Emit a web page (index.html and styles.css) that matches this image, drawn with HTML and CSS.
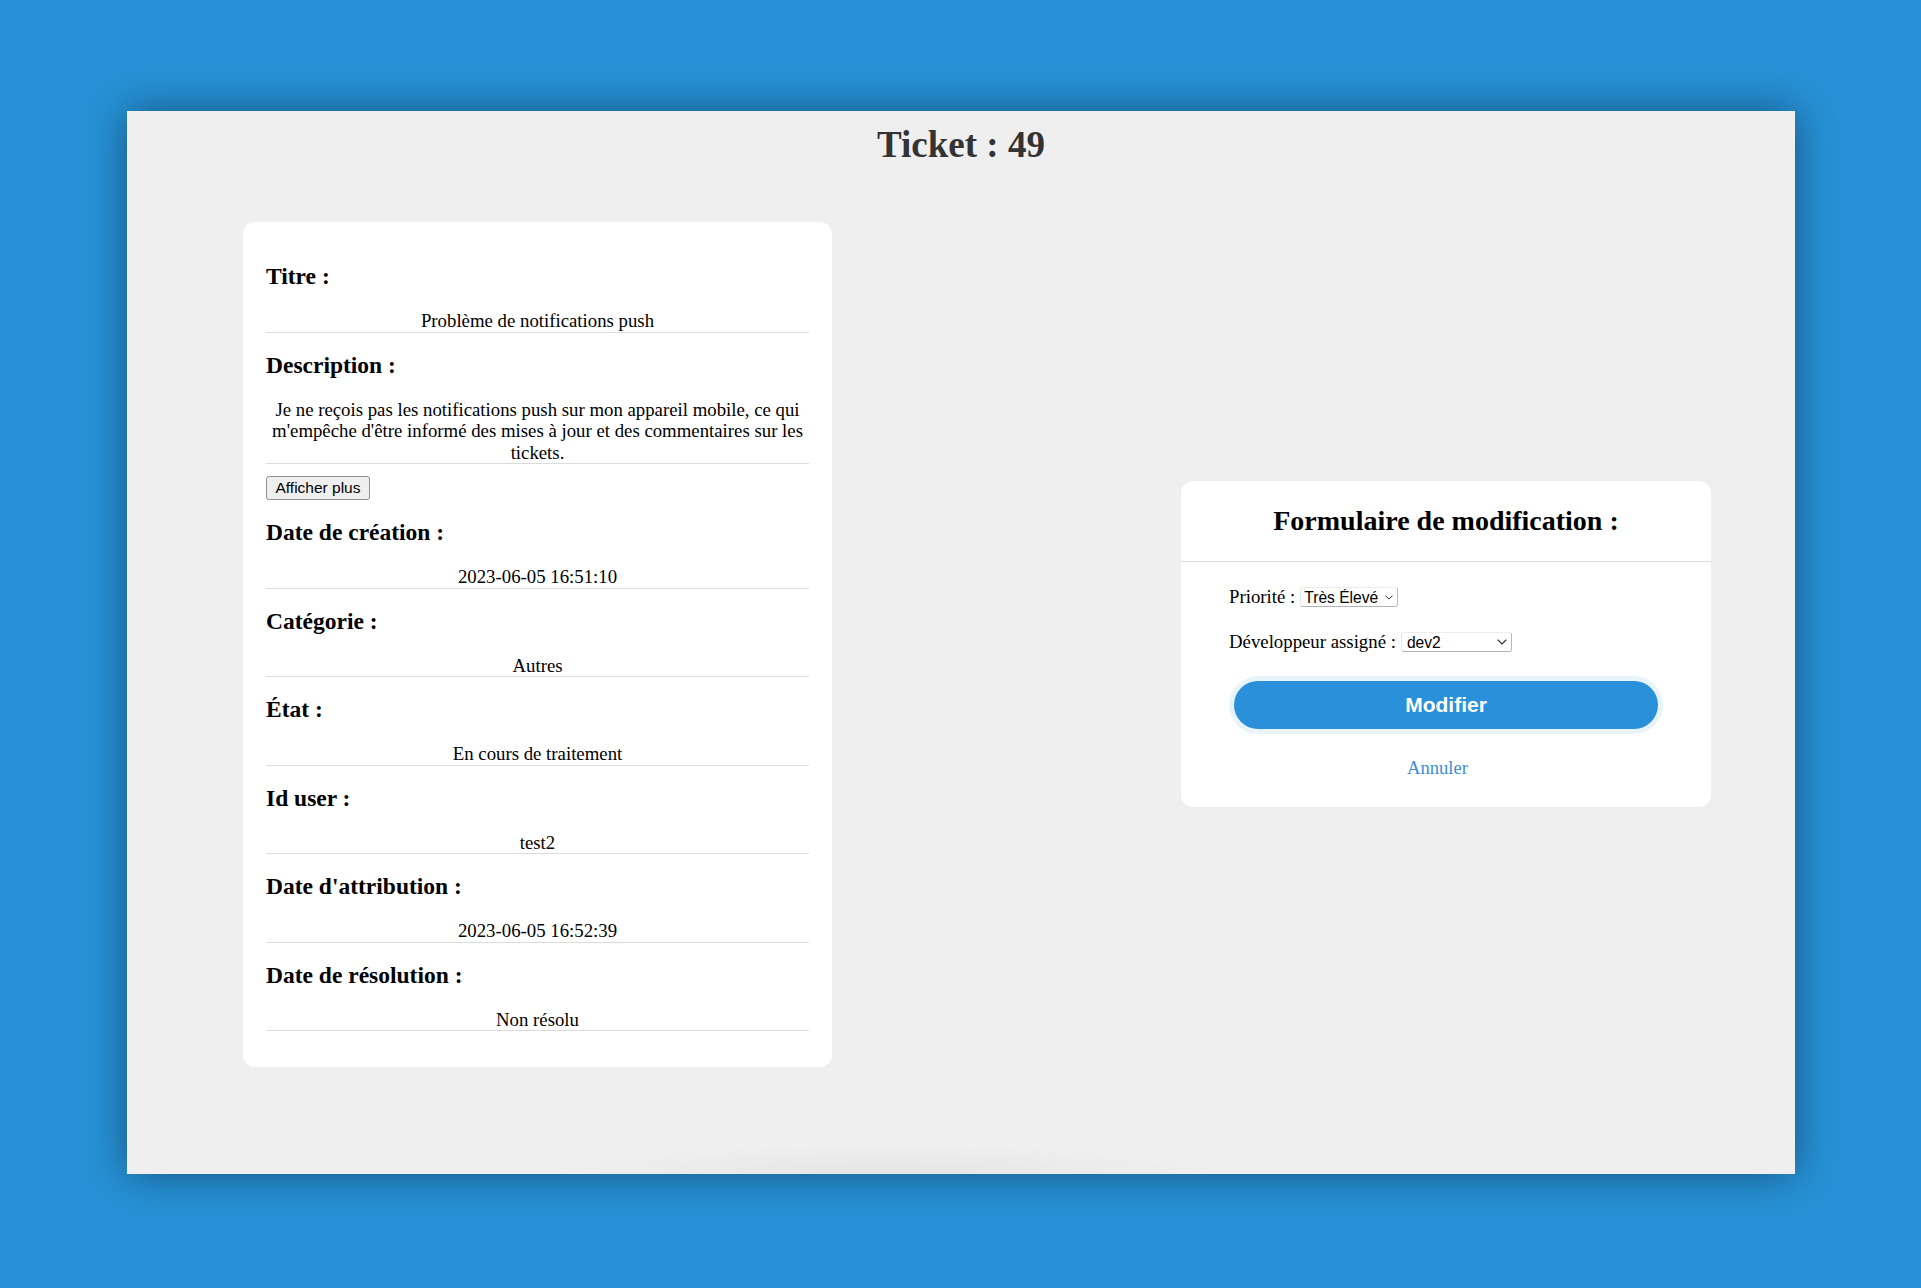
FILE: index.html
```html
<!DOCTYPE html>
<html lang="fr">
<head>
<meta charset="utf-8">
<title>Ticket : 49</title>
<link rel="stylesheet" href="styles.css">
</head>
<body>
<div class="page">
  <main class="frame">
    <h1 class="title">Ticket : 49</h1>
    <div class="row">
      <section class="ticket-card">
        <h3 class="label">Titre :</h3>
        <p class="value">Problème de notifications push</p>

        <h3 class="label">Description :</h3>
        <p class="value value-desc">Je ne reçois pas les notifications push sur mon appareil mobile, ce qui m'empêche d'être informé des mises à jour et des commentaires sur les tickets.</p>
        <button class="more-btn" type="button">Afficher plus</button>

        <h3 class="label">Date de création :</h3>
        <p class="value">2023-06-05 16:51:10</p>

        <h3 class="label">Catégorie :</h3>
        <p class="value">Autres</p>

        <h3 class="label">État :</h3>
        <p class="value">En cours de traitement</p>

        <h3 class="label">Id user :</h3>
        <p class="value">test2</p>

        <h3 class="label">Date d'attribution :</h3>
        <p class="value">2023-06-05 16:52:39</p>

        <h3 class="label">Date de résolution :</h3>
        <p class="value value-last">Non résolu</p>
      </section>

      <section class="form-card">
        <div class="form-head">
          <h2 class="form-title">Formulaire de modification :</h2>
        </div>
        <form class="form-body">
          <div class="field">
            <label class="field-label" for="prio">Priorité :</label>
            <span class="select-wrap select-prio">
              <select id="prio" class="select">
                <option>Très Élevé</option>
              </select>
              <svg class="chev chev-sm" viewBox="0 0 10 6" width="8" height="5"><path d="M0.6 0.6 L5 5 L9.4 0.6" fill="none" stroke="#222" stroke-width="1.2"/></svg>
            </span>
          </div>
          <div class="field field-2">
            <label class="field-label" for="dev">Développeur assigné :</label>
            <span class="select-wrap select-dev">
              <select id="dev" class="select">
                <option>dev2</option>
              </select>
              <svg class="chev" viewBox="0 0 10 6" width="10" height="6"><path d="M0.6 0.6 L5 5 L9.4 0.6" fill="none" stroke="#222" stroke-width="1.1"/></svg>
            </span>
          </div>
          <button class="submit-btn" type="button">Modifier</button>
          <div class="cancel-row"><a class="cancel" href="#">Annuler</a></div>
        </form>
      </section>
    </div>
  </main>
</div>
</body>
</html>
```

FILE: styles.css
```css
* { box-sizing: border-box; }

html, body {
  margin: 0;
  padding: 0;
  background: #2691d6;
}

body {
  font-family: "Liberation Serif", "Times New Roman", serif;
  color: #000;
}

.page {
  padding: 111px 126px 114px 127px;
}

.frame {
  position: relative;
  width: 1668px;
  height: 1063px;
  background: #efefef;
  box-shadow: 0 0 38px rgba(0, 0, 0, 0.42);
  overflow: hidden;
}

.frame::after {
  content: "";
  position: absolute;
  left: 420px;
  width: 680px;
  bottom: -30px;
  height: 60px;
  background: radial-gradient(ellipse at center, rgba(0, 0, 0, 0.045) 0%, rgba(0, 0, 0, 0) 70%);
  pointer-events: none;
}

.title {
  margin: 12.5px 0 0;
  font-size: 37px;
  line-height: 42px;
  font-weight: bold;
  text-align: center;
  color: #333;
}

.row {
  display: flex;
  align-items: center;
  gap: 349px;
  padding: 56.5px 0 0 116px;
}

.ticket-card {
  width: 589px;
  flex: none;
  background: #fff;
  border-radius: 12px;
  padding: 41px 23px 35.5px;
}

.label {
  margin: 0 0 20px;
  font-size: 23.5px;
  line-height: 27px;
  font-weight: bold;
}

.value {
  margin: 0 0 19px;
  font-size: 18.8px;
  line-height: 21.5px;
  text-align: center;
  border-bottom: 1px solid #dcdcdc;
}

.value-desc {
  margin-bottom: 12px;
}

.value-last {
  margin-bottom: 0;
}

.more-btn {
  display: block;
  margin: 0 0 19px;
  width: 104px;
  height: 24px;
  padding: 0;
  font-family: "Liberation Sans", Arial, sans-serif;
  font-size: 15.5px;
  color: #000;
  background: #efefef;
  border: 1px solid #8f8f8f;
  border-radius: 3px;
}

.form-card {
  width: 530px;
  flex: none;
  background: #fff;
  border-radius: 12px;
}

.form-head {
  padding: 24px 10px;
  border-bottom: 1px solid #dcdcdc;
}

.form-title {
  margin: 0;
  font-size: 28px;
  line-height: 32px;
  font-weight: bold;
  text-align: center;
}

.form-body {
  padding: 25px 48px 27px;
}

.field {
  display: flex;
  align-items: center;
  gap: 5px;
  height: 20px;
}

.field-2 {
  margin-top: 25px;
}

.field-label {
  font-size: 18.8px;
  line-height: 20px;
}

.select-wrap {
  position: relative;
  display: inline-block;
  height: 20px;
}

.select-prio { width: 98px; }
.select-dev { width: 111px; }

.select {
  appearance: none;
  -webkit-appearance: none;
  display: block;
  width: 100%;
  height: 20px;
  margin: 0;
  padding: 1px 14px 0 3px;
  font-family: "Liberation Sans", Arial, sans-serif;
  font-size: 15.6px;
  line-height: 18px;
  color: #000;
  background: #fff;
  border: 1px solid;
  border-color: #ececec #b9b9b9 #b3b3b3 #e6e6e6;
  border-radius: 3px;
}

.select-dev .select {
  padding-left: 5px;
}

.chev {
  position: absolute;
  right: 5px;
  top: 7px;
  pointer-events: none;
}

.chev-sm {
  top: 7.5px;
}

.submit-btn {
  display: block;
  margin: 29px 5px 0;
  width: calc(100% - 10px);
  height: 48px;
  padding: 0;
  border: none;
  border-radius: 24px;
  background: #2990d9;
  color: #fff;
  font-family: "Liberation Sans", Arial, sans-serif;
  font-size: 21px;
  font-weight: bold;
  box-shadow: 0 0 0 5px #e8f4fc;
}

.cancel-row {
  margin-top: 28px;
  text-align: center;
  line-height: 22px;
  padding-right: 17px;
}

.cancel {
  font-size: 18.6px;
  color: #3a8fd5;
  text-decoration: none;
}
```
